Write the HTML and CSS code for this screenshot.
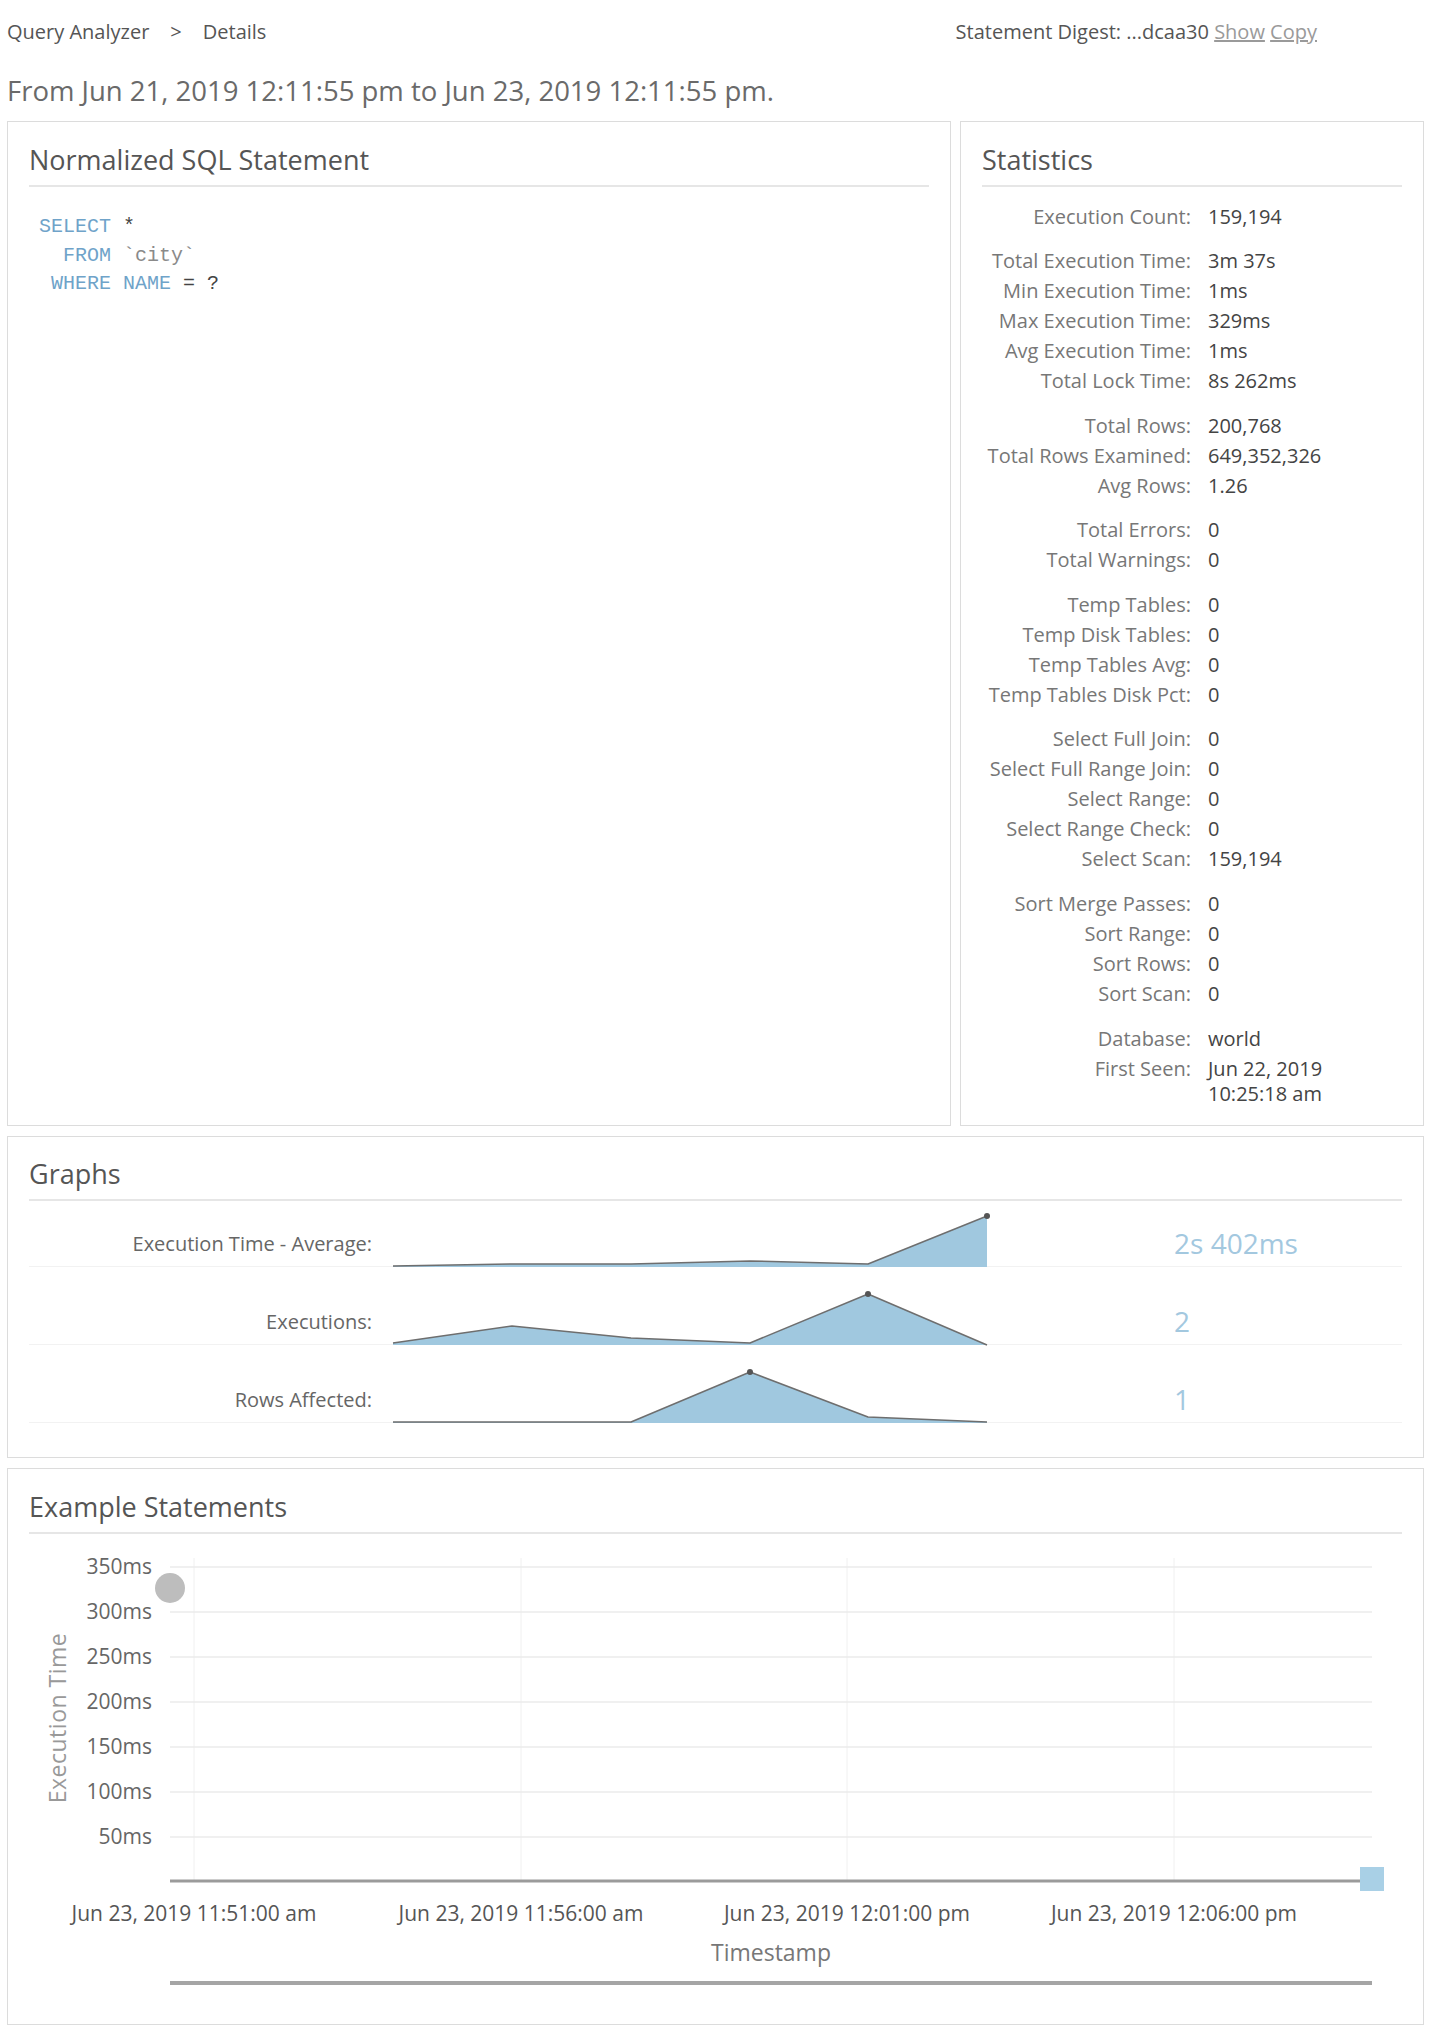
FILE: index.html
```html
<!DOCTYPE html>
<html lang="en">
<head>
<meta charset="utf-8">
<title>Query Analyzer - Details</title>
<link rel="stylesheet" href="styles.css">
</head>
<body>
<header class="topbar">
  <nav class="crumbs"><span>Query Analyzer</span><span class="sep">&gt;</span><span>Details</span></nav>
  <div class="digest">Statement Digest: ...dcaa30 <a href="#">Show</a> <a href="#">Copy</a></div>
</header>
<p class="range">From Jun 21, 2019 12:11:55 pm to Jun 23, 2019 12:11:55 pm.</p>

<div class="top-row">
  <section class="panel sql-panel">
    <h2 class="panel-title">Normalized SQL Statement</h2>
<pre class="sql"><span class="kw">SELECT</span> <span class="op">*</span>
  <span class="kw">FROM</span> <span class="id">`city`</span>
 <span class="kw">WHERE</span> <span class="kw">NAME</span> <span class="op">=</span> <span class="op">?</span></pre>
  </section>

  <section class="panel stats-panel">
    <h2 class="panel-title">Statistics</h2>
    <div class="stats">
      <div class="stat-group">
        <div class="stat"><span class="k">Execution Count:</span><span class="v">159,194</span></div>
      </div>
      <div class="stat-group">
        <div class="stat"><span class="k">Total Execution Time:</span><span class="v">3m 37s</span></div>
        <div class="stat"><span class="k">Min Execution Time:</span><span class="v">1ms</span></div>
        <div class="stat"><span class="k">Max Execution Time:</span><span class="v">329ms</span></div>
        <div class="stat"><span class="k">Avg Execution Time:</span><span class="v">1ms</span></div>
        <div class="stat"><span class="k">Total Lock Time:</span><span class="v">8s 262ms</span></div>
      </div>
      <div class="stat-group">
        <div class="stat"><span class="k">Total Rows:</span><span class="v">200,768</span></div>
        <div class="stat"><span class="k">Total Rows Examined:</span><span class="v">649,352,326</span></div>
        <div class="stat"><span class="k">Avg Rows:</span><span class="v">1.26</span></div>
      </div>
      <div class="stat-group">
        <div class="stat"><span class="k">Total Errors:</span><span class="v">0</span></div>
        <div class="stat"><span class="k">Total Warnings:</span><span class="v">0</span></div>
      </div>
      <div class="stat-group">
        <div class="stat"><span class="k">Temp Tables:</span><span class="v">0</span></div>
        <div class="stat"><span class="k">Temp Disk Tables:</span><span class="v">0</span></div>
        <div class="stat"><span class="k">Temp Tables Avg:</span><span class="v">0</span></div>
        <div class="stat"><span class="k">Temp Tables Disk Pct:</span><span class="v">0</span></div>
      </div>
      <div class="stat-group">
        <div class="stat"><span class="k">Select Full Join:</span><span class="v">0</span></div>
        <div class="stat"><span class="k">Select Full Range Join:</span><span class="v">0</span></div>
        <div class="stat"><span class="k">Select Range:</span><span class="v">0</span></div>
        <div class="stat"><span class="k">Select Range Check:</span><span class="v">0</span></div>
        <div class="stat"><span class="k">Select Scan:</span><span class="v">159,194</span></div>
      </div>
      <div class="stat-group">
        <div class="stat"><span class="k">Sort Merge Passes:</span><span class="v">0</span></div>
        <div class="stat"><span class="k">Sort Range:</span><span class="v">0</span></div>
        <div class="stat"><span class="k">Sort Rows:</span><span class="v">0</span></div>
        <div class="stat"><span class="k">Sort Scan:</span><span class="v">0</span></div>
      </div>
      <div class="stat-group">
        <div class="stat"><span class="k">Database:</span><span class="v">world</span></div>
        <div class="stat"><span class="k">First Seen:</span><span class="v">Jun 22, 2019<br>10:25:18 am</span></div>
      </div>
    </div>
  </section>
</div>

<section class="panel graphs-panel">
  <h2 class="panel-title">Graphs</h2>
  <div class="graphs">
    <div class="graph-row">
      <div class="graph-label">Execution Time - Average:</div>
      <svg class="spark" width="594" height="52" viewBox="0 0 594 52">
        <polygon class="area" points="0,52 0,51 119,49 238,49 357,46 475,49 594,1 594,52"/>
        <polyline class="line" points="0,51 119,49 238,49 357,46 475,49 594,1"/>
        <circle class="peak" cx="594" cy="1" r="3"/>
      </svg>
      <div class="graph-value">2s 402ms</div>
    </div>
    <div class="graph-row">
      <div class="graph-label">Executions:</div>
      <svg class="spark" width="594" height="52" viewBox="0 0 594 52">
        <polygon class="area" points="0,52 0,50 119,33 238,45 357,50 475,1 594,52"/>
        <polyline class="line" points="0,50 119,33 238,45 357,50 475,1 594,52"/>
        <circle class="peak" cx="475" cy="1" r="3"/>
      </svg>
      <div class="graph-value">2</div>
    </div>
    <div class="graph-row">
      <div class="graph-label">Rows Affected:</div>
      <svg class="spark" width="594" height="52" viewBox="0 0 594 52">
        <polygon class="area" points="0,52 0,51 119,51 238,51 357,1 475,46 594,51 594,52"/>
        <polyline class="line" points="0,51 119,51 238,51 357,1 475,46 594,51"/>
        <circle class="peak" cx="357" cy="1" r="3"/>
      </svg>
      <div class="graph-value">1</div>
    </div>
  </div>
</section>

<section class="panel examples-panel">
  <h2 class="panel-title">Example Statements</h2>
  <svg class="chart" width="1373" height="475" viewBox="0 1 1373 475">
    <g class="grid-v">
      <line x1="165" y1="25" x2="165" y2="349"/>
      <line x1="492" y1="25" x2="492" y2="349"/>
      <line x1="818" y1="25" x2="818" y2="349"/>
      <line x1="1145" y1="25" x2="1145" y2="349"/>
    </g>
    <g class="grid-h">
      <line x1="141" y1="34" x2="1343" y2="34"/>
      <line x1="141" y1="79" x2="1343" y2="79"/>
      <line x1="141" y1="124" x2="1343" y2="124"/>
      <line x1="141" y1="169" x2="1343" y2="169"/>
      <line x1="141" y1="214" x2="1343" y2="214"/>
      <line x1="141" y1="259" x2="1343" y2="259"/>
      <line x1="141" y1="304" x2="1343" y2="304"/>
    </g>
    <g class="tick-y" text-anchor="end">
      <text x="123" y="41">350ms</text>
      <text x="123" y="86">300ms</text>
      <text x="123" y="131">250ms</text>
      <text x="123" y="176">200ms</text>
      <text x="123" y="221">150ms</text>
      <text x="123" y="266">100ms</text>
      <text x="123" y="311">50ms</text>
    </g>
    <line class="axis" x1="141" y1="348" x2="1343" y2="348"/>
    <g class="tick-x" text-anchor="middle">
      <text x="165" y="388">Jun 23, 2019 11:51:00 am</text>
      <text x="492" y="388">Jun 23, 2019 11:56:00 am</text>
      <text x="818" y="388">Jun 23, 2019 12:01:00 pm</text>
      <text x="1145" y="388">Jun 23, 2019 12:06:00 pm</text>
    </g>
    <text class="axis-title" x="742" y="428" text-anchor="middle">Timestamp</text>
    <text class="axis-title y-title" transform="translate(37,185) rotate(-90)" text-anchor="middle">Execution Time</text>
    <line class="scrollbar" x1="141" y1="450" x2="1343" y2="450"/>
    <circle class="point" cx="141" cy="55" r="15"/>
    <rect class="point-sq" x="1331" y="334" width="24" height="24"/>
  </svg>
</section>
</body>
</html>
```

FILE: styles.css
```css
* { box-sizing: border-box; }

body {
  margin: 0;
  padding: 0 9px 15px 7px;
  font-family: "Open Sans", "DejaVu Sans", sans-serif;
  color: #555;
  background: #fff;
}

.topbar {
  display: flex;
  justify-content: space-between;
  align-items: center;
  height: 62px;
  padding-right: 107px;
  font-size: 20px;
  color: #555;
}

.crumbs .sep { margin: 0 21px; }

.digest a {
  color: #9a9a9a;
  text-decoration: underline;
}

.range {
  margin: 0;
  font-size: 27.5px;
  line-height: 58px;
  color: #6a6a6a;
}

.top-row {
  display: grid;
  grid-template-columns: 1fr 464px;
  column-gap: 9px;
  margin-top: 1px;
}

.panel {
  border: 1px solid #dcdcdc;
  padding: 0 21px;
  background: #fff;
}

.panel-title {
  margin: 0;
  padding: 21px 0 8px;
  font-size: 27px;
  line-height: 34px;
  font-weight: normal;
  color: #555;
  border-bottom: 2px solid #e6e6e6;
}

.sql {
  margin: 26px 0 0;
  padding-left: 10px;
  font-family: "Liberation Mono", "DejaVu Sans Mono", monospace;
  font-size: 20px;
  line-height: 28.5px;
  color: #555;
}
.sql .kw { color: #6fa3c9; }
.sql .id { color: #8a8a8a; }
.sql .op { color: #444; }

.stats {
  padding: 14px 0 17px;
  font-size: 20px;
}
.stat-group + .stat-group { margin-top: 14.6px; }
.stat {
  display: grid;
  grid-template-columns: 209px 1fr;
  column-gap: 17px;
  padding: 2.5px 0;
  line-height: 25px;
}
.stat .k { text-align: right; color: #777; }
.stat .v { color: #444; }

.graphs-panel {
  margin-top: 10px;
  padding-bottom: 34px;
}
.graphs-panel .panel-title { padding-top: 20px; padding-bottom: 8px; }
.graph-row {
  display: grid;
  grid-template-columns: 343px 594px 1fr;
  column-gap: 21px;
  align-items: end;
  padding-top: 26px;
  background: linear-gradient(#f2f2f2, #f2f2f2) left bottom / 100% 1px no-repeat;
}
.graph-row:first-child { padding-top: 14px; }
.graph-label {
  text-align: right;
  font-size: 20px;
  line-height: 28px;
  padding-bottom: 9px;
  color: #666;
}
.spark { display: block; overflow: visible; }
.spark .area { fill: #a0c8df; }
.spark .line { fill: none; stroke: #6e6e6e; stroke-width: 1.5; stroke-linejoin: round; }
.spark .peak { fill: #555; }
.graph-value {
  padding-left: 166px;
  padding-bottom: 7px;
  font-size: 28px;
  line-height: 34px;
  color: #a3c8df;
}

.examples-panel {
  margin-top: 10px;
  padding-bottom: 15px;
}
.chart { display: block; font-family: "Open Sans", "DejaVu Sans", sans-serif; }
.chart .grid-v line { stroke: #f0f0f0; stroke-width: 1; }
.chart .grid-h line { stroke: #ebebeb; stroke-width: 1.5; }
.chart .tick-y text { font-size: 21px; fill: #666; }
.chart .tick-x text { font-size: 21px; fill: #555; }
.chart .axis { stroke: #9b9b9b; stroke-width: 3; }
.chart .axis-title { font-size: 23px; fill: #777; }
.chart .y-title { fill: #999; letter-spacing: 0.5px; }
.chart .scrollbar { stroke: #a5a5a5; stroke-width: 4; }
.chart .point { fill: #bdbdbd; }
.chart .point-sq { fill: #a9d0e6; }
```
